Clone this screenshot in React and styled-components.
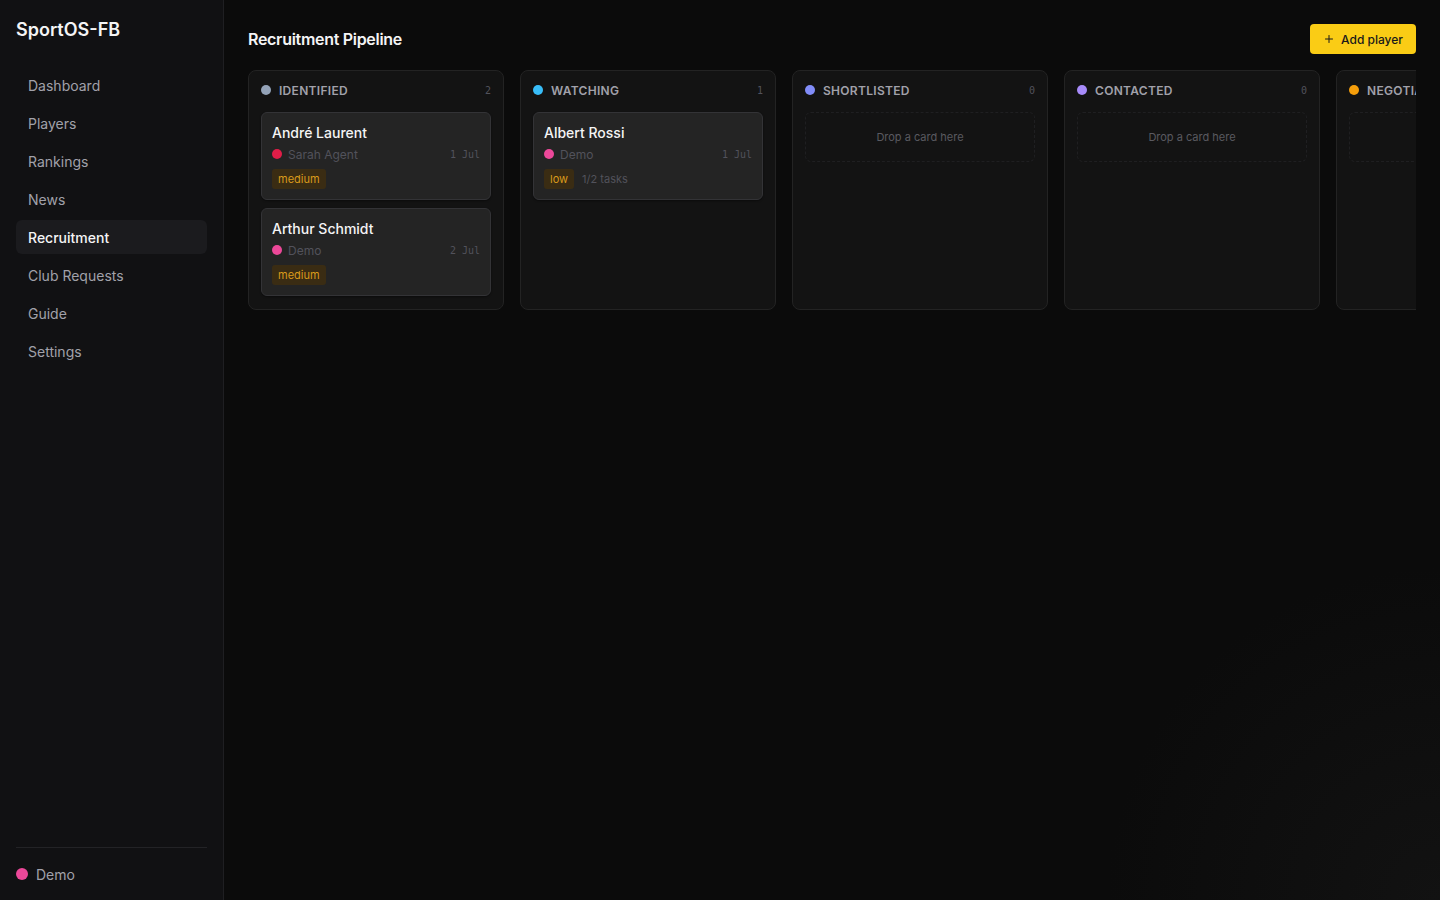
import styled, { createGlobalStyle } from "styled-components";

const GlobalStyle = createGlobalStyle`
  html, body {
    margin: 0;
    padding: 0;
    background: #0b0b0b;
    font-family: Inter, "Noto Sans", sans-serif;
    color: #e4e4e7;
  }
  * { box-sizing: border-box; }
`;

const Shell = styled.div`
  display: flex;
  width: 1440px;
  height: 900px;
  overflow: hidden;
`;

const Sidebar = styled.aside`
  width: 224px;
  flex-shrink: 0;
  background: #111113;
  border-right: 1px solid #1f1f22;
  display: flex;
  flex-direction: column;
  padding: 16px 16px 0 16px;
`;

const Brand = styled.div`
  font-size: 18px;
  font-weight: 600;
  color: #f4f4f5;
  height: 28px;
  line-height: 28px;
  margin-bottom: 24px;
`;

const Nav = styled.nav`
  display: flex;
  flex-direction: column;
  gap: 4px;
  flex: 1;
`;

const NavItem = styled.div`
  height: 34px;
  display: flex;
  align-items: center;
  padding-left: 12px;
  border-radius: 6px;
  font-size: 14px;
  font-weight: ${(p) => (p.$active ? 500 : 400)};
  color: ${(p) => (p.$active ? "#f4f4f5" : "#a1a1aa")};
  background: ${(p) => (p.$active ? "#1b1b1e" : "transparent")};
`;

const SideFooter = styled.div`
  border-top: 1px solid #232326;
  height: 53px;
  display: flex;
  align-items: center;
  gap: 8px;
  font-size: 14px;
  color: #a1a1aa;
`;

const Dot = styled.span`
  width: ${(p) => p.$size || 10}px;
  height: ${(p) => p.$size || 10}px;
  border-radius: 50%;
  background: ${(p) => p.$color};
  flex-shrink: 0;
`;

const Main = styled.main`
  flex: 1;
  padding: 24px;
  background: radial-gradient(circle at 100% 100%, #121212 0%, #0b0b0b 22%);
  min-width: 0;
`;

const Header = styled.div`
  display: flex;
  justify-content: space-between;
  align-items: center;
  height: 30px;
  margin-bottom: 16px;
`;

const Title = styled.h1`
  margin: 0;
  font-size: 16px;
  font-weight: 600;
  color: #f4f4f5;
  letter-spacing: -0.3px;
`;

const AddButton = styled.button`
  height: 30px;
  width: 106px;
  border: none;
  border-radius: 4px;
  background: #facc15;
  color: #18181b;
  font-family: inherit;
  font-size: 12px;
  font-weight: 500;
  display: flex;
  align-items: center;
  justify-content: center;
  gap: 6px;
  padding: 0;
`;

const Board = styled.div`
  display: flex;
  gap: 16px;
  overflow: hidden;
`;

const Column = styled.section`
  width: 256px;
  height: 240px;
  flex-shrink: 0;
  background: #131313;
  border: 1px solid #232323;
  border-radius: 8px;
  padding: 12px;
  display: flex;
  flex-direction: column;
  gap: 8px;
`;

const ColumnHead = styled.div`
  height: 16px;
  margin-top: -1px;
  margin-bottom: 6px;
  display: flex;
  align-items: center;
  gap: 8px;
`;

const ColumnName = styled.span`
  flex: 1;
  font-size: 12px;
  font-weight: 600;
  color: #a1a1aa;
  letter-spacing: 0.3px;
  text-transform: uppercase;
  white-space: nowrap;
`;

const Count = styled.span`
  font-family: "DejaVu Sans Mono", "Liberation Mono", monospace;
  font-size: 10px;
  color: #52525b;
`;

const Card = styled.div`
  height: 88px;
  background: #242424;
  border: 1px solid #333336;
  border-radius: 6px;
  padding: 10px 10px;
  display: flex;
  flex-direction: column;
  box-shadow: 0 1px 2px rgba(0, 0, 0, 0.4);
`;

const Name = styled.div`
  font-size: 14px;
  font-weight: 500;
  color: #f4f4f5;
  line-height: 20px;
`;

const Meta = styled.div`
  display: flex;
  align-items: center;
  gap: 6px;
  font-size: 12px;
  color: #52525b;
  height: 22px;
`;

const Owner = styled.span`
  flex: 1;
`;

const DateText = styled.span`
  font-family: "DejaVu Sans Mono", "Liberation Mono", monospace;
  font-size: 10px;
  color: #52525b;
`;

const Tags = styled.div`
  display: flex;
  align-items: center;
  gap: 8px;
  margin-top: 4px;
`;

const Priority = styled.span`
  font-size: 11px;
  color: #d99a1b;
  background: #3a2c13;
  border-radius: 3px;
  padding: 0 6px;
  height: 20px;
  line-height: 20px;
`;

const Tasks = styled.span`
  font-size: 11px;
  color: #52525b;
`;

const DropZone = styled.div`
  height: 50px;
  border: 1px dashed #1f1f21;
  border-radius: 6px;
  display: flex;
  align-items: center;
  justify-content: center;
  font-size: 11px;
  color: #5a5a60;
`;

const columns = [
  {
    name: "Identified",
    color: "#94a3b8",
    cards: [
      { name: "André Laurent", owner: "Sarah Agent", ownerColor: "#e11d48", date: "1 Jul", priority: "medium" },
      { name: "Arthur Schmidt", owner: "Demo", ownerColor: "#ec4899", date: "2 Jul", priority: "medium" },
    ],
  },
  {
    name: "Watching",
    color: "#38bdf8",
    cards: [
      { name: "Albert Rossi", owner: "Demo", ownerColor: "#ec4899", date: "1 Jul", priority: "low", tasks: "1/2 tasks" },
    ],
  },
  { name: "Shortlisted", color: "#818cf8", cards: [] },
  { name: "Contacted", color: "#a78bfa", cards: [] },
  { name: "Negotiating", color: "#f59e0b", cards: [] },
];

const navItems = ["Dashboard", "Players", "Rankings", "News", "Recruitment", "Club Requests", "Guide", "Settings"];

function PlusIcon() {
  return (
    <svg width="12" height="12" viewBox="0 0 24 24" fill="none" stroke="currentColor" strokeWidth="2" strokeLinecap="round">
      <path d="M5 12h14" />
      <path d="M12 5v14" />
    </svg>
  );
}

export default function App() {
  return (
    <>
      <GlobalStyle />
      <Shell>
        <Sidebar>
          <Brand>SportOS-FB</Brand>
          <Nav>
            {navItems.map((item) => (
              <NavItem key={item} $active={item === "Recruitment"}>
                {item}
              </NavItem>
            ))}
          </Nav>
          <SideFooter>
            <Dot $size={12} $color="#ec4899" />
            Demo
          </SideFooter>
        </Sidebar>
        <Main>
          <Header>
            <Title>Recruitment Pipeline</Title>
            <AddButton>
              <PlusIcon />
              Add player
            </AddButton>
          </Header>
          <Board>
            {columns.map((col) => (
              <Column key={col.name}>
                <ColumnHead>
                  <Dot $color={col.color} />
                  <ColumnName>{col.name}</ColumnName>
                  <Count>{col.cards.length}</Count>
                </ColumnHead>
                {col.cards.length === 0 && <DropZone>Drop a card here</DropZone>}
                {col.cards.map((card) => (
                  <Card key={card.name}>
                    <Name>{card.name}</Name>
                    <Meta>
                      <Dot $color={card.ownerColor} />
                      <Owner>{card.owner}</Owner>
                      <DateText>{card.date}</DateText>
                    </Meta>
                    <Tags>
                      <Priority>{card.priority}</Priority>
                      {card.tasks && <Tasks>{card.tasks}</Tasks>}
                    </Tags>
                  </Card>
                ))}
              </Column>
            ))}
          </Board>
        </Main>
      </Shell>
    </>
  );
}
